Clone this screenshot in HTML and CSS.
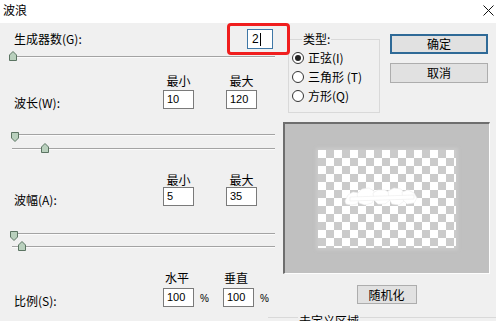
FILE: index.html
```html
<!DOCTYPE html>
<html lang="zh">
<head>
<meta charset="utf-8">
<title>波浪</title>
<link rel="stylesheet" href="styles.css">
</head>
<body>
<div class="dialog">
  <div class="titlebar">
    <span class="title">波浪</span>
    <svg class="close" width="11" height="11" viewBox="0 0 11 11"><path d="M0.5 0.5 L10.5 10.5 M10.5 0.5 L0.5 10.5" stroke="#111" stroke-width="1" fill="none"/></svg>
  </div>
  <div class="content">
    <div class="left">
      <div class="gen-row">
        <span class="label">生成器数(G):</span>
        <div class="input focus">2<span class="caret"></span></div>
      </div>
      <div class="slider gen-slider">
        <div class="track"></div>
        <svg class="thumb up" style="left:-3px" width="8" height="10" viewBox="0 0 8 10"><path d="M4 0.5 L7.5 4 V9.5 H0.5 V4 Z" fill="#b9d0bd" stroke="#5b7462"/></svg>
      </div>

      <div class="param wave">
        <span class="head c2">最小</span>
        <span class="head c4">最大</span>
        <span class="label plabel">波长(W):</span>
        <div class="input c2r">10</div>
        <div class="input c4r">120</div>
      </div>
      <div class="slider first">
        <div class="track"></div>
        <svg class="thumb down" style="left:-1px" width="8" height="10" viewBox="0 0 8 10"><path d="M0.5 0.5 H7.5 V6 L4 9.5 L0.5 6 Z" fill="#b9d0bd" stroke="#5b7462"/></svg>
      </div>
      <div class="slider second">
        <div class="track"></div>
        <svg class="thumb up" style="left:29px" width="8" height="10" viewBox="0 0 8 10"><path d="M4 0.5 L7.5 4 V9.5 H0.5 V4 Z" fill="#b9d0bd" stroke="#5b7462"/></svg>
      </div>

      <div class="param amp">
        <span class="head c2">最小</span>
        <span class="head c4">最大</span>
        <span class="label plabel">波幅(A):</span>
        <div class="input c2r">5</div>
        <div class="input c4r">35</div>
      </div>
      <div class="slider first amp-first">
        <div class="track"></div>
        <svg class="thumb down" style="left:-2px" width="8" height="10" viewBox="0 0 8 10"><path d="M0.5 0.5 H7.5 V6 L4 9.5 L0.5 6 Z" fill="#b9d0bd" stroke="#5b7462"/></svg>
      </div>
      <div class="slider second amp-second">
        <div class="track"></div>
        <svg class="thumb up" style="left:6px" width="8" height="10" viewBox="0 0 8 10"><path d="M4 0.5 L7.5 4 V9.5 H0.5 V4 Z" fill="#b9d0bd" stroke="#5b7462"/></svg>
      </div>

      <div class="param scale">
        <span class="head s2">水平</span>
        <span class="head s4">垂直</span>
        <span class="label plabel">比例(S):</span>
        <div class="input s2r">100</div>
        <span class="pct s3r">%</span>
        <div class="input s4r">100</div>
        <span class="pct s5r">%</span>
      </div>
    </div>

    <div class="right">
      <div class="top-row">
        <div class="group">
          <span class="legend">类型:</span>
          <div class="radio"><span class="dot checked"></span><span>正弦(I)</span></div>
          <div class="radio"><span class="dot"></span><span>三角形 (T)</span></div>
          <div class="radio"><span class="dot"></span><span>方形(Q)</span></div>
        </div>
        <div class="buttons">
          <div class="btn default">确定</div>
          <div class="btn">取消</div>
        </div>
      </div>
      <div class="preview-col">
        <div class="preview">
          <div class="checker">
            <svg class="blob" width="74" height="20" viewBox="0 0 74 20">
              <g fill="#ffffff" stroke="#ececec" stroke-width="0.6">
                <path d="M1 14 L4 8 L9 5 L15 6 L16 11 L13 17 L7 18 L2 17 Z"/>
                <path d="M13 7 L18 2 L25 1 L30 4 L31 10 L28 16 L21 18 L15 16 Z"/>
                <path d="M29 6 L34 3 L41 3 L46 6 L46 13 L41 17 L34 17 L30 13 Z"/>
                <path d="M44 4 L50 1 L57 2 L61 7 L60 14 L55 18 L48 17 L45 12 Z"/>
                <path d="M58 5 L64 3 L70 6 L73 11 L70 16 L63 17 L59 13 Z"/>
                <path d="M6 10 L70 8 L70 12 L6 14 Z"/>
              </g>
            </svg>
          </div>
        </div>
        <div class="btn random">随机化</div>
      </div>
      <div class="bottom-group">
        <span class="legend">未定义区域</span>
      </div>
    </div>
  </div>
  <div class="annotation"></div>
</div>
</body>
</html>
```

FILE: styles.css
```css
* { box-sizing: border-box; }

body {
  margin: 0;
  width: 496px;
  height: 321px;
  overflow: hidden;
  background: #f0f0f0;
  font-family: "Noto Sans CJK SC", "Liberation Sans", sans-serif;
  font-size: 12px;
  color: #000;
}

.dialog {
  position: relative;
  width: 496px;
  height: 321px;
}

.titlebar {
  height: 23px;
  background: #fff;
  display: flex;
  align-items: center;
  justify-content: space-between;
  padding: 0 2px 0 3px;
}

.title {
  font-size: 12px;
  line-height: 14px;
  margin-top: -3px;
}

.close {
  margin-top: -3px;
}

.content {
  display: grid;
  grid-template-columns: 283px 213px;
}

/* ---------- left column ---------- */
.left {
  display: flex;
  flex-direction: column;
}

.label {
  line-height: 14px;
  white-space: nowrap;
}

.gen-row {
  display: flex;
  align-items: center;
  justify-content: space-between;
  height: 20px;
  margin-top: 6px;
  padding: 0 10px 0 14px;
}

.input {
  width: 31px;
  height: 19px;
  background: #fff;
  border: 1px solid #7a7a7a;
  font-family: "Liberation Sans", sans-serif;
  font-size: 11px;
  line-height: 17px;
  padding-left: 3px;
  display: flex;
  align-items: center;
}

.input.focus {
  width: 26px;
  height: 20px;
  border-color: #3f77a6;
  padding-left: 4px;
  font-size: 12px;
}

.caret {
  display: inline-block;
  width: 1px;
  height: 13px;
  background: #000;
  margin-left: 1px;
}

.slider {
  position: relative;
  height: 12px;
  margin: 1px 8px 0 12px;
}

.track {
  position: absolute;
  left: 0;
  right: 0;
  top: 6px;
  height: 2px;
  border-top: 1px solid #a3a3a3;
  border-bottom: 1px solid #fbfbfb;
}

.thumb {
  position: absolute;
  display: block;
}

.thumb.up { top: 1px; }
.thumb.down { top: 4px; }

.slider.first { margin-top: 19px; }
.slider.second { margin-top: 2px; }
.slider.amp-first { margin-top: 21px; }
.slider.amp-second { margin-top: 1px; }

.param {
  display: grid;
  grid-template-columns: 149px 31px 32px 31px;
  grid-template-rows: 14px 19px;
  padding-left: 14px;
}

.param.wave { margin-top: 12px; row-gap: 2px; }
.param.amp { margin-top: 19px; row-gap: 0; }
.param.scale {
  margin-top: 19px;
  row-gap: 3px;
  grid-template-columns: 149px 31px 29px 31px 1fr;
}

.head {
  grid-row: 1;
  line-height: 14px;
  text-align: center;
  white-space: nowrap;
}

.c2 { grid-column: 2; }
.c4 { grid-column: 4; }
.c2r { grid-row: 2; grid-column: 2; }
.c4r { grid-row: 2; grid-column: 4; }

.s2 { grid-column: 2; text-align: left; padding-left: 2px; }
.s4 { grid-column: 4; text-align: left; padding-left: 1px; }
.s2r { grid-row: 2; grid-column: 2; }
.s3r { grid-row: 2; grid-column: 3; }
.s4r { grid-row: 2; grid-column: 4; }
.s5r { grid-row: 2; grid-column: 5; }

.plabel {
  grid-row: 2;
  grid-column: 1;
  align-self: end;
  margin-bottom: -1px;
}

.pct {
  font-family: "Liberation Sans", sans-serif;
  font-size: 10px;
  padding-left: 6px;
  align-self: center;
  margin-top: 2px;
}

/* ---------- right column ---------- */
.right {
  display: flex;
  flex-direction: column;
}

.top-row {
  display: flex;
  align-items: flex-start;
  padding-left: 5px;
  gap: 10px;
}

.group {
  width: 92px;
  height: 74px;
  margin-top: 16px;
  border: 1px solid #d9d9d9;
  padding-left: 3px;
  display: flex;
  flex-direction: column;
}

.legend {
  align-self: flex-start;
  line-height: 14px;
  background: #f0f0f0;
  padding: 0 1px;
}

.group .legend {
  margin: -8px 0 0 10px;
}

.radio {
  display: flex;
  align-items: center;
  height: 19px;
  gap: 4px;
  white-space: nowrap;
}

.group .legend + .radio { margin-top: 2px; }

.dot {
  width: 12px;
  height: 12px;
  border-radius: 50%;
  border: 1px solid #333;
  background: #fff;
  display: flex;
  align-items: center;
  justify-content: center;
}

.dot.checked::after {
  content: "";
  width: 6px;
  height: 6px;
  border-radius: 50%;
  background: #222;
}

.buttons {
  display: flex;
  flex-direction: column;
  gap: 9px;
  margin-top: 11px;
}

.btn {
  width: 98px;
  height: 20px;
  background: #e1e1e1;
  border: 1px solid #adadad;
  display: flex;
  align-items: center;
  justify-content: center;
  line-height: 14px;
}

.btn.default {
  border: 2px solid #2f6a97;
}

.preview-col {
  width: 207px;
  display: flex;
  flex-direction: column;
  align-items: center;
}

.preview {
  width: 207px;
  height: 152px;
  margin-top: 9px;
  background: #c0c0c0;
  border-top: 2px solid #6e6e6e;
  border-left: 2px solid #6e6e6e;
  border-right: 1px solid #fdfdfd;
  border-bottom: 1px solid #fdfdfd;
  display: flex;
  align-items: center;
  justify-content: center;
}

.checker {
  position: relative;
  width: 138px;
  height: 98px;
  background-color: #fff;
  background-image: conic-gradient(#cbcbcb 25%, #fff 0 50%, #cbcbcb 0 75%, #fff 0);
  background-size: 16px 16px;
  box-shadow: 0 0 3px 2px rgba(205, 205, 205, 0.7);
}

.blob {
  position: absolute;
  left: 26px;
  top: 37px;
  display: block;
}

.btn.random {
  width: 60px;
  height: 19px;
  margin-top: 11px;
}

.bottom-group {
  margin-top: 13px;
  margin-left: -15px;
  border-top: 1px solid #d9d9d9;
  height: 20px;
  display: flex;
}

.bottom-group .legend {
  margin: -4px 0 0 30px;
}

/* annotation overlay */
.annotation {
  position: absolute;
  left: 227px;
  top: 23px;
  width: 63px;
  height: 32px;
  border: 3px solid #f01e1e;
  border-radius: 4px;
}
```
